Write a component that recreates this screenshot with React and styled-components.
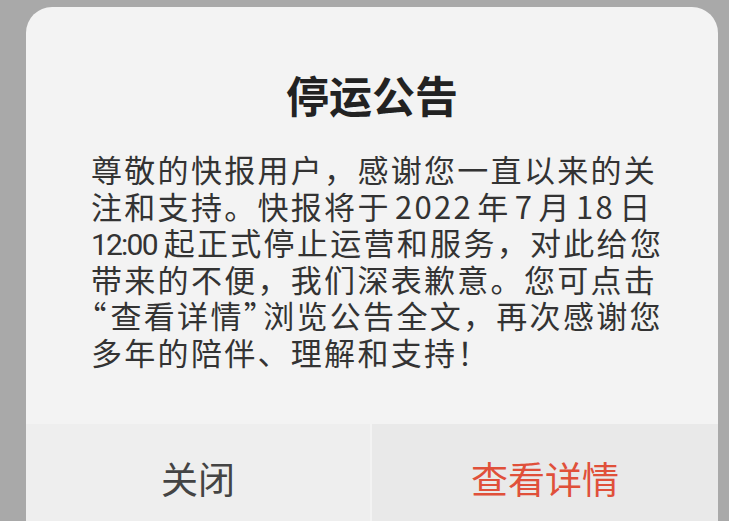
import React from "react";
import styled, { createGlobalStyle } from "styled-components";

const GlobalStyle = createGlobalStyle`
  html, body {
    margin: 0;
    padding: 0;
    height: 100%;
    overflow: hidden;
    background: #a9a9a9;
  }
  body {
    font-family: "Noto Sans CJK SC", "Noto Sans", sans-serif;
  }
`;

export default function App() {
  return (
    <>
      <GlobalStyle />
      <Screen>
        <Dialog>
          <Title>停运公告</Title>
          <Message>
            <Line>尊敬的快报用户，感谢您一直以来的关</Line>
            <Line>注和支持。快报将于 2022 年 7 月 18 日</Line>
            <Line>
              <Time>12:00</Time>起正式停止运营和服务，对此给您
            </Line>
            <Line>带来的不便，我们深表歉意。您可点击</Line>
            <Line>
              <Quote>“</Quote>查看详情<Quote>”</Quote>浏览公告全文，再次感谢您
            </Line>
            <Line>多年的陪伴、理解和支持！</Line>
          </Message>
          <Actions>
            <ActionButton type="button">关闭</ActionButton>
            <ActionButton type="button" $primary>
              查看详情
            </ActionButton>
          </Actions>
        </Dialog>
      </Screen>
    </>
  );
}

const Screen = styled.div`
  padding: 7px 11px 0 26px;
`;

const Dialog = styled.div`
  display: flex;
  flex-direction: column;
  width: 692px;
  min-height: 560px;
  background: #f3f3f3;
  border-radius: 26px 26px 0 0;
  overflow: hidden;
`;

const Title = styled.h1`
  margin: 0;
  padding-top: 62px;
  height: 50px;
  line-height: 50px;
  text-align: center;
  font-size: 43px;
  font-weight: 700;
  color: #222;
`;

const Message = styled.div`
  padding: 32px 0 54px 65px;
  font-size: 31px;
  line-height: 36.5px;
  letter-spacing: 2.3px;
  word-spacing: -5px;
  color: #333;
`;

const Line = styled.div`
  height: 36.5px;
  white-space: nowrap;
`;

const Time = styled.span`
  font-family: Roboto, "Noto Sans", sans-serif;
  font-size: 30px;
  letter-spacing: -1.8px;
  margin-right: 7px;
`;

const Quote = styled.span`
  font-feature-settings: "halt";
  letter-spacing: 4px;
`;

const Actions = styled.div`
  display: grid;
  grid-template-columns: 344px 346px;
  column-gap: 2px;
  height: 140px;
`;

const ActionButton = styled.button`
  display: flex;
  align-items: flex-start;
  justify-content: center;
  padding: 29px 0 0;
  border: none;
  background: ${(p) => (p.$primary ? "#e9e9e9" : "#eeeeee")};
  color: ${(p) => (p.$primary ? "#e0503a" : "#444")};
  font-family: "Noto Sans CJK SC", "Noto Sans", sans-serif;
  font-size: 37px;
  line-height: 50px;
  cursor: pointer;
`;
